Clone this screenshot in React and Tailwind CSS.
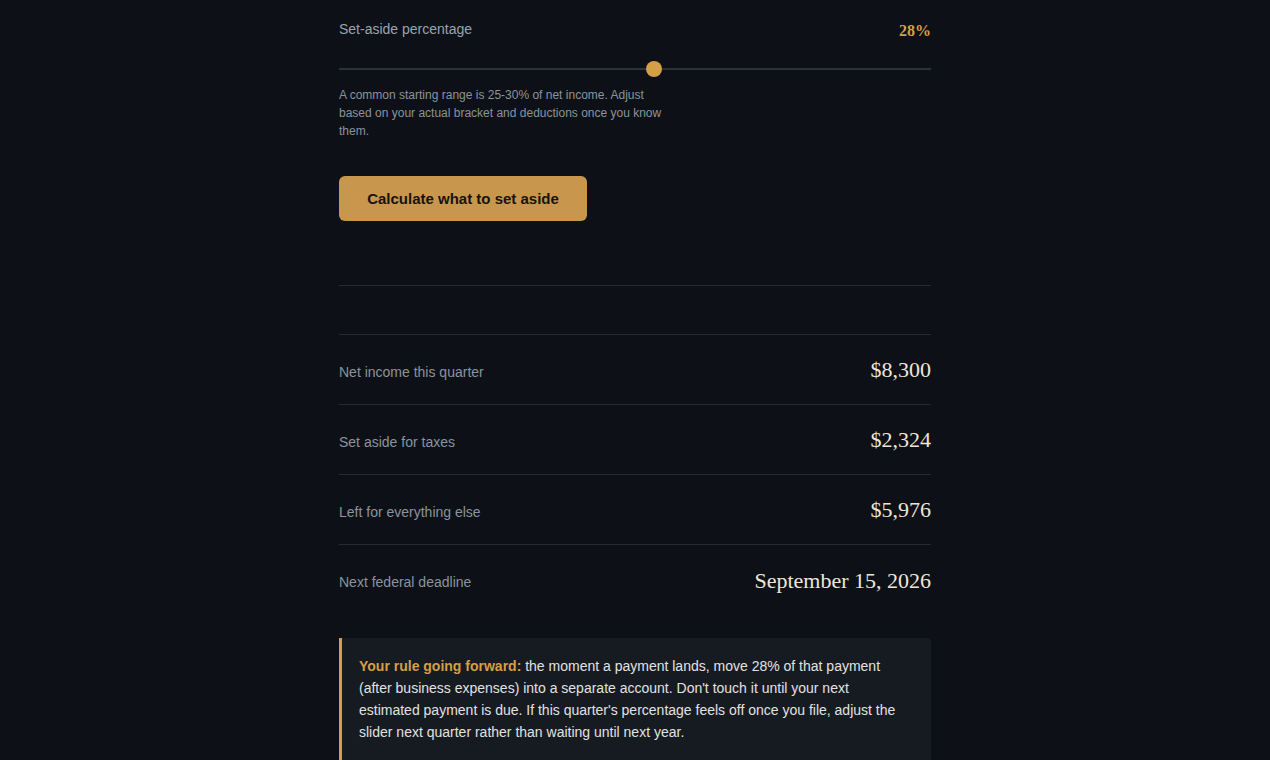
export default function App() {
  const rows = [
    ["Net income this quarter", "$8,300"],
    ["Set aside for taxes", "$2,324"],
    ["Left for everything else", "$5,976"],
    ["Next federal deadline", "September 15, 2026"],
  ];
  const pct = (28 - 20) / 15;
  return (
    <div className="min-h-screen w-full bg-[#0d1117] font-['Liberation_Sans',Arial,sans-serif]">
      <div className="mx-auto w-[592px] pt-[19px] pb-10">
        <div className="flex items-center justify-between h-[20px]">
          <span className="text-[14px] text-[#9ba3ae]">Set-aside percentage</span>
          <span className="font-['Liberation_Serif',serif] font-bold text-[16px] text-[#d49f45] pt-[4px]">28%</span>
        </div>
        <div className="relative mt-[22px] h-[16px]">
          <div className="absolute left-0 right-0 top-[7px] h-[2px] bg-[#2c323b]" />
          <div
            className="absolute top-0 h-[16px] w-[16px] rounded-full bg-[#d49f45]"
            style={{ left: `${pct * 576}px` }}
          />
        </div>
        <p className="mt-[9px] max-w-[330px] text-[12px] leading-[18px] text-[#8b939e]">
          A common starting range is 25-30% of net income. Adjust based on your actual bracket and deductions once you know them.
        </p>
        <button className="mt-[36px] h-[45px] w-[248px] rounded-[6px] bg-[#c9964d] pt-[2px] text-[15px] font-bold text-[#17130d]">
          Calculate what to set aside
        </button>
        <div className="mt-[64px] border-t border-[#262b33]" />
        <div className="mt-[48px] border-t border-[#262b33]">
          {rows.map(([label, value], i) => {
            const last = i === rows.length - 1;
            return (
              <div
                key={label}
                className={last ? "flex h-[70px] items-center justify-between" : "flex h-[70px] items-center justify-between border-b border-[#262b33]"}
              >
                <span className={last ? "text-[14px] text-[#8b939e] pt-[4px]" : "text-[14px] text-[#8b939e] pt-[6px]"}>{label}</span>
                <span className="font-['Liberation_Serif',serif] text-[22px] text-[#ede6d8]">{value}</span>
              </div>
            );
          })}
        </div>
        <div className="mt-[23px] rounded-r-[4px] border-l-[3px] border-[#d49f45] bg-[#161b22] pl-[17px] pr-[20px] pt-[17px] pb-[20px]">
          <p className="text-[14px] leading-[22px] text-[#e2e2e0]">
            <span className="font-bold text-[#d49f45]">Your rule going forward:</span> the moment a payment lands, move 28% of that payment (after business expenses) into a separate account. Don't touch it until your next estimated payment is due. If this quarter's percentage feels off once you file, adjust the slider next quarter rather than waiting until next year.
          </p>
        </div>
      </div>
    </div>
  );
}
